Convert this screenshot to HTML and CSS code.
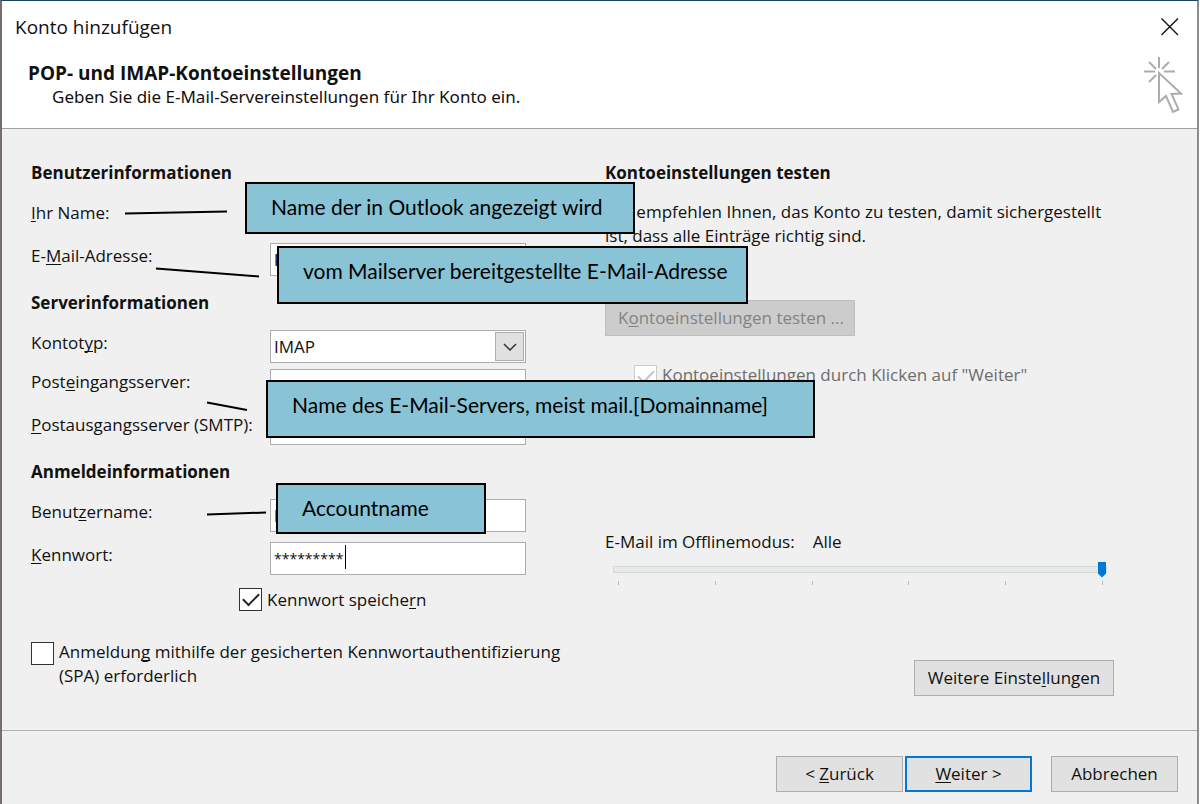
FILE: index.html
```html
<!DOCTYPE html>
<html lang="de">
<head>
<meta charset="utf-8">
<title>Konto hinzufügen</title>
<link rel="stylesheet" href="styles.css">
</head>
<body>
<div class="dialog">
  <header class="header">
    <div class="titlebar">
      <span class="title">Konto hinzufügen</span>
      <button class="close" type="button" aria-label="Schließen">
        <svg width="20" height="20" viewBox="0 0 20 20"><path d="M1.500 1.500 18 18M18 1.500 1.500 18" stroke="#111" stroke-width="1.400" fill="none"/></svg>
      </button>
    </div>
    <div class="intro">
      <div>
        <h1 class="intro-title">POP- und IMAP-Kontoeinstellungen</h1>
        <p class="intro-text">Geben Sie die E-Mail-Servereinstellungen für Ihr Konto ein.</p>
      </div>
      <svg class="pointer" width="40" height="58" viewBox="0 0 40 58" fill="none" stroke="#adadad" stroke-width="2">
        <path d="M16 1V12M1 15.500H12M21 15.500H32M6 6 13 13M26 6 19 13M6 26 13 19"/>
        <path d="M16 17 V46 L23 40 L30 56 L35.500 53.500 L28.500 38 L38 37.500 Z" fill="#fff"/>
      </svg>
    </div>
  </header>

  <main class="content">
    <div class="column">
      <h2 class="heading">Benutzerinformationen</h2>
      <div class="row"><label for="name"><u>I</u>hr Name:</label><input class="field" id="name" type="text"></div>
      <div class="row"><label for="mail">E-<u>M</u>ail-Adresse:</label><input class="field" id="mail" type="text" value="k"></div>

      <h2 class="heading">Serverinformationen</h2>
      <div class="row row-tight">
        <label for="type">Kontot<u>y</u>p:</label>
        <div class="combo">
          <select class="field" id="type"><option>IMAP</option></select>
          <span class="combo-button"><svg width="14" height="8" viewBox="0 0 14 8"><path d="M1 1 7 7 13 1" stroke="#333" stroke-width="1.500" fill="none"/></svg></span>
        </div>
      </div>
      <div class="row"><label for="in">Post<u>e</u>ingangsserver:</label><input class="field" id="in" type="text"></div>
      <div class="row"><label for="out"><u>P</u>ostausgangsserver (SMTP):</label><input class="field" id="out" type="text"></div>

      <h2 class="heading">Anmeldeinformationen</h2>
      <div class="row"><label for="user">Benut<u>z</u>ername:</label><input class="field" id="user" type="text" value="k"></div>
      <div class="row"><label for="pass"><u>K</u>ennwort:</label><div class="password"><input class="field" id="pass" type="text" value="*********"><span class="caret"></span></div></div>

      <label class="check check-save"><input type="checkbox" checked><span>Kennwort speiche<u>r</u>n</span></label>
      <label class="check check-spa"><input type="checkbox"><span>Anmeldun<u>g</u> mithilfe der gesicherten Kennwortauthentifizierung<br>(SPA) erforderlich</span></label>
    </div>

    <div class="column">
      <h2 class="heading">Kontoeinstellungen testen</h2>
      <p class="hint">Wir empfehlen Ihnen, das Konto zu testen, damit sichergestellt<br>ist, dass alle Einträge richtig sind.</p>
      <button class="button button-test" type="button" disabled>K<u>o</u>ntoeinstellungen testen ...</button>
      <label class="check check-auto"><input type="checkbox" checked disabled><span>Kontoeinstellungen durch Klicken auf "Weiter"</span></label>
      <div class="offline">
        <label for="offline">E-Mail im Offlinemodus:</label><output for="offline">Alle</output>
      </div>
      <div class="slider">
        <input id="offline" type="range" min="0" max="5" value="5">
        <div class="ticks"><i></i><i></i><i></i><i></i><i></i><i></i></div>
      </div>
      <button class="button button-more" type="button">Weitere Einste<u>l</u>lungen</button>
    </div>
  </main>

  <footer class="footer">
    <button class="button" type="button">&lt; <u>Z</u>urück</button>
    <button class="button button-default" type="button"><u>W</u>eiter &gt;</button>
    <button class="button button-cancel" type="button">Abbrechen</button>
  </footer>

  <svg class="connectors" width="300" height="540" viewBox="0 0 300 540" stroke="#000" stroke-width="2" fill="none">
    <path d="M123 212.500 225 210.500M154 267.500 257 275.500M205 401.500 245 409M205 513.500 264 511.500"/>
  </svg>
  <div class="callout callout-name">Name der in Outlook angezeigt wird</div>
  <div class="callout callout-mail">vom Mailserver bereitgestellte E-Mail-Adresse</div>
  <div class="callout callout-server">Name des E-Mail-Servers, meist mail.[Domainname]</div>
  <div class="callout callout-account">Accountname</div>
</div>
</body>
</html>
```
FILE: styles.css
```css
* { box-sizing: border-box; }

body {
  margin: 0;
  background: #fff;
  color: #111;
  font: 17px/24px "Open Sans", "Noto Sans", sans-serif;
}

h1, h2, p { margin: 0; }
u { text-underline-offset: 2px; text-decoration-skip-ink: none; }
button, input, select { font: inherit; color: inherit; }

.dialog {
  position: relative;
  display: flex;
  flex-direction: column;
  min-height: 100vh;
  margin-right: 1px;
  border: solid #776d6d;
  border-width: 1px 2px 0;
  border-top-color: #17455f;
  border-right-color: #8d8d8d;
  background: #f0f0f0;
}

.header {
  border-bottom: 1px solid #a0a0a0;
  background: #fff;
}
.titlebar {
  display: flex;
  justify-content: space-between;
  align-items: center;
  padding: 12px 17px 0 13px;
}
.title { font-size: 19px; line-height: 28px; }
.close {
  display: flex;
  padding: 0;
  border: 0;
  background: none;
}
.intro {
  display: flex;
  justify-content: space-between;
  padding: 15px 14px 14px 26px;
}
.intro-title {
  padding-top: 5px;
  font-size: 19px;
  font-weight: bold;
  line-height: 24px;
}
.intro-text { padding-left: 24px; font-family: "Noto Sans", sans-serif; }

.content {
  display: grid;
  grid-template-columns: 1fr 1fr;
  flex: 1;
  padding: 32px 18px 0 29px;
}
.column { display: flex; flex-direction: column; align-items: flex-start; }
.heading {
  margin: 5px 0 15px;
  font-size: 17px;
  font-weight: bold;
  line-height: 24px;
}
.column > .heading:first-child { margin-top: 0; }

.row {
  display: grid;
  grid-template-columns: 239px 256px;
  align-items: center;
  margin-bottom: 10px;
}
.row-tight { margin-bottom: 6px; }
.row label { padding-bottom: 7px; white-space: nowrap; }
.field {
  display: block;
  width: 100%;
  height: 33px;
  padding: 0 3px;
  border: 1px solid #abadb3;
  border-radius: 0;
  outline: 0;
  background: #fff;
  appearance: none;
}
.combo { position: relative; }
.combo-button {
  position: absolute;
  top: 2px;
  right: 2px;
  bottom: 2px;
  width: 29px;
  display: grid;
  place-items: center;
  border: 1px solid #adadad;
  background: #e1e1e1;
  pointer-events: none;
}
.password { position: relative; }
.password .field { font-size: 14px; }
.caret {
  position: absolute;
  left: 75px;
  top: 3px;
  width: 1px;
  height: 24px;
  background: #000;
}

.check { display: flex; align-items: flex-start; gap: 5px; white-space: nowrap; }
.check input {
  display: grid;
  place-items: center;
  width: 23px;
  height: 23px;
  margin: 0;
  border: 1px solid #333;
  background: #fff;
  appearance: none;
}
.check input:checked::after {
  content: "";
  width: 14px;
  height: 7px;
  margin-bottom: 5px;
  border: solid #222;
  border-width: 0 0 2px 2px;
  transform: rotate(-45deg);
}
.check input:disabled { border-color: #ccc; }
.check input:disabled::after { border-color: #c4c4c4; }
.check-save { margin: 3px 0 0 208px; }
.check-spa { margin-top: 28px; }
.check-spa input { margin-top: 2px; }
.check-auto { margin: 27px 0 0 29px; color: #6d6d6d; }
.check-auto input { margin-top: 2px; }

.hint { white-space: nowrap; }

.button {
  min-width: 127px;
  height: 36px;
  padding: 0 12px;
  border: 1px solid #adadad;
  background: #e1e1e1;
  white-space: nowrap;
}
.button-test {
  width: 250px;
  margin-top: 52px;
  border-color: #bfbfbf;
  background: #ccc;
  color: #838383;
}
.button-more { width: 200px; margin: 75px 0 0 309px; }
.button-default { border: 2px solid #0078d7; }
.button-cancel { margin-left: 17px; }

.offline { display: flex; gap: 18px; margin-top: 142px; }
.slider { width: 494px; margin: 6px 0 0 8px; }
.slider input {
  display: block;
  width: 100%;
  height: 18px;
  margin: 0;
  background: none;
  appearance: none;
}
.slider input::-webkit-slider-runnable-track {
  height: 7px;
  border: 1px solid #d3d7d7;
  background: #e7eaea;
}
.slider input::-webkit-slider-thumb {
  width: 8px;
  height: 16px;
  margin-top: -5px;
  background: #0078d7;
  clip-path: polygon(0 0, 100% 0, 100% 75%, 50% 100%, 0 75%);
  appearance: none;
}
.ticks { display: flex; justify-content: space-between; padding: 3px 4px 0 5px; }
.ticks i { width: 1px; height: 4px; background: #bbb; }

.footer {
  display: flex;
  justify-content: flex-end;
  gap: 2px;
  padding: 25px 19px 12px;
  border-top: 1px solid #b0b0b0;
}

.connectors { position: absolute; left: 0; top: 0; pointer-events: none; }
.callout {
  position: absolute;
  padding: 9px 24px;
  border: 2px solid #000;
  background: #88c3d6;
  color: #000;
  font: 21px/28px Lato, sans-serif;
  white-space: nowrap;
}
.callout-name { left: 243px; top: 181px; width: 390px; height: 52px; }
.callout-mail { left: 275px; top: 245px; width: 471px; height: 58px; }
.callout-server { left: 264px; top: 379px; width: 549px; height: 58px; }
.callout-account { left: 274px; top: 482px; width: 210px; height: 51px; }
```
